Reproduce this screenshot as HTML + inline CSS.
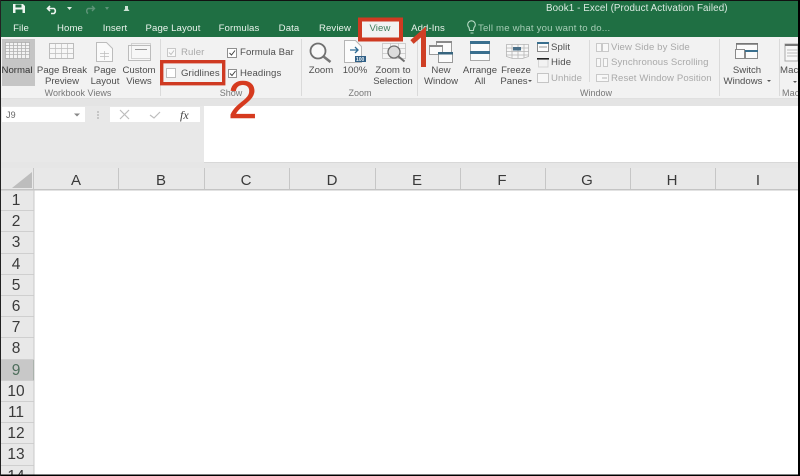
<!DOCTYPE html>
<html><head><meta charset="utf-8"><style>
html,body{margin:0;padding:0;background:#000}
#p{position:relative;width:800px;height:476px;overflow:hidden;background:#fff;font-family:"Liberation Sans",sans-serif;filter:blur(.35px)}
#p div{position:absolute}
.t{position:absolute;white-space:nowrap;transform:translateX(-50%);font-size:9.6px;line-height:11px;color:#4e4e4e}
.l{position:absolute;white-space:nowrap;font-size:9.6px;line-height:11px;color:#4e4e4e;letter-spacing:.1px}
.g{color:#a9a9a9}
.m{color:#777;font-size:9px}
.tab{position:absolute;white-space:nowrap;transform:translateX(-50%);top:23px;font-size:9.6px;line-height:12px;color:#e9f3ec;letter-spacing:.1px}
.c{position:absolute;transform:translateX(-50%);top:172px;font-size:15px;line-height:18px;color:#3a3a3a}
.r{position:absolute;width:30px;padding-right:3px;left:1px;text-align:center;font-size:15.5px;line-height:21px;color:#3a3a3a;border-bottom:1px solid #cfcfcf;background:#e8e8e8;height:20.2px;box-sizing:content-box}
svg{position:absolute;left:0;top:0}
</style></head><body><div id="p">
<div style="left:0;top:1px;width:798px;height:36px;background:#1f6f43"></div>
<div style="left:0;top:37px;width:798px;height:62px;background:#f2f2f2"></div>
<div style="left:0;top:99px;width:798px;height:7px;background:#e4e4e4"></div>
<div style="left:0;top:106px;width:798px;height:84px;background:#e8e8e8"></div>
<div style="left:204px;top:106px;width:594px;height:56px;background:#fff"></div>
<div style="left:0;top:162px;width:798px;height:6px;background:#e6e6e6"></div>
<div style="left:204px;top:162px;width:594px;height:1px;background:#d8d8d8"></div>
<div style="left:2px;top:107px;width:83px;height:15px;background:#fff"></div>
<div style="left:110px;top:107px;width:90px;height:15px;background:#fff"></div>
<div style="left:2px;top:39px;width:33px;height:47px;background:#c5c5c5"></div>
<div style="left:358px;top:19px;width:44px;height:18px;background:#f2f2f2"></div>

<span class="tab" style="left:21px">File</span>
<span class="tab" style="left:70px">Home</span>
<span class="tab" style="left:115px">Insert</span>
<span class="tab" style="left:173px">Page Layout</span>
<span class="tab" style="left:239px">Formulas</span>
<span class="tab" style="left:289px">Data</span>
<span class="tab" style="left:335px">Review</span>
<span class="tab" style="left:380px;color:#3f7d5b">View</span>
<span class="tab" style="left:428px">Add-Ins</span>
<span class="tab" style="left:478px;transform:none;color:#a6cdb6;letter-spacing:.2px">Tell me what you want to do...</span>
<span class="tab" style="left:546px;top:3px;transform:none;color:#dcebe2;font-size:9.8px">Book1 - Excel (Product Activation Failed)</span>

<span class="t" style="left:17px;top:65px;color:#333">Normal</span>
<span class="t" style="left:62px;top:65px">Page Break</span><span class="t" style="left:62px;top:76px">Preview</span>
<span class="t" style="left:105px;top:65px">Page</span><span class="t" style="left:105px;top:76px">Layout</span>
<span class="t" style="left:139px;top:65px">Custom</span><span class="t" style="left:139px;top:76px">Views</span>
<span class="t m" style="left:78px;top:88px">Workbook Views</span>
<span class="l g" style="left:181px;top:47px">Ruler</span>
<span class="l" style="left:240px;top:47px">Formula Bar</span>
<span class="l" style="left:181px;top:68px">Gridlines</span>
<span class="l" style="left:240px;top:68px">Headings</span>
<span class="t m" style="left:231px;top:88px">Show</span>
<span class="t" style="left:321px;top:65px">Zoom</span>
<span class="t" style="left:355px;top:65px">100%</span>
<span class="t" style="left:393px;top:65px">Zoom to</span><span class="t" style="left:393px;top:76px">Selection</span>
<span class="t m" style="left:360px;top:88px">Zoom</span>
<span class="t" style="left:441px;top:65px">New</span><span class="t" style="left:441px;top:76px">Window</span>
<span class="t" style="left:480px;top:65px">Arrange</span><span class="t" style="left:480px;top:76px">All</span>
<span class="t" style="left:516px;top:65px">Freeze</span><span class="t" style="left:514px;top:76px">Panes</span>
<span class="l" style="left:551px;top:42px">Split</span>
<span class="l" style="left:551px;top:57px">Hide</span>
<span class="l g" style="left:551px;top:73px">Unhide</span>
<span class="l g" style="left:611px;top:42px">View Side by Side</span>
<span class="l g" style="left:611px;top:57px">Synchronous Scrolling</span>
<span class="l g" style="left:611px;top:73px">Reset Window Position</span>
<span class="t m" style="left:596px;top:88px">Window</span>
<span class="t" style="left:747px;top:65px">Switch</span><span class="t" style="left:743px;top:76px">Windows</span>
<span class="l" style="left:780px;top:65px">Mac</span>
<span class="l m" style="left:782px;top:88px">Mac</span>
<span class="l" style="left:6px;top:110px;font-size:9px;color:#666">J9</span>
<span class="l" style="left:180px;top:108px;font:italic 12px 'Liberation Serif',serif;color:#444">fx</span>

<span class="c" style="left:76px">A</span><span class="c" style="left:161px">B</span><span class="c" style="left:246px">C</span><span class="c" style="left:332px">D</span><span class="c" style="left:417px">E</span><span class="c" style="left:502px">F</span><span class="c" style="left:587px">G</span><span class="c" style="left:672px">H</span><span class="c" style="left:758px">I</span>

<span class="r" style="top:190px">1</span><span class="r" style="top:211.2px">2</span><span class="r" style="top:232.4px">3</span><span class="r" style="top:253.6px">4</span><span class="r" style="top:274.8px">5</span><span class="r" style="top:296px">6</span><span class="r" style="top:317.2px">7</span><span class="r" style="top:338.4px">8</span>
<span class="r" style="top:359.6px;background:#c8c8c8;color:#4f6f5d;border-right:1px solid #8a9a90;padding-right:2px">9</span>
<span class="r" style="top:380.8px">10</span><span class="r" style="top:402px">11</span><span class="r" style="top:423.2px">12</span><span class="r" style="top:444.4px">13</span><span class="r" style="top:465.6px">14</span>

<svg width="800" height="476" viewBox="0 0 800 476" fill="none">
<!-- QAT -->
<path d="M13 4h10l2 2v7H13z" fill="#eef5f0"/><rect x="15.500" y="4.500" width="6" height="3" fill="#1f6f43"/><rect x="15.500" y="9.500" width="7" height="3.500" fill="#1f6f43"/>
<path d="M50 6l-2.500 2.500L50 11M48 8.500h6a3 3 0 0 1 0 5h-3" stroke="#eef5f0" stroke-width="1.600"/>
<path d="M67 7l2.500 3L72 7z" fill="#dfeee5"/>
<path d="M92 6l2.500 2.500L92 11M94 8.500h-6a3 3 0 0 0 0 5" stroke="#5d9478" stroke-width="1.400"/>
<path d="M105 7l2 3 2-3z" fill="#5d9478"/>
<path d="M125 6h3v3l1.500 2h-6l1.500-2z" fill="#cfe3d7"/>
<path d="M469 27.500a3.800 3.800 0 1 1 5 0l-.6 3h-3.800zM470.500 33h3" stroke="#b9dcc7" stroke-width="1.100"/>

<!-- group dividers -->
<g stroke="#dadada"><path d="M160.500 39v57M301.500 39v57M417.500 39v57M719.500 39v57M779.500 39v57M589.500 40v42"/></g>
<rect x="0" y="98" width="798" height="1" fill="#e0e0e0"/>

<!-- Normal -->
<g stroke="#b0b0b0" stroke-width=".8"><rect x="5.500" y="42.500" width="24" height="16" fill="#f2f2f2"/><path d="M9.500 42v17M13.500 42v17M17.500 42v17M21.500 42v17M25.500 42v17M5 45.500h25M5 48.500h25M5 51.500h25M5 54.500h25"/></g>
<!-- Page break -->
<g stroke="#bcbcbc"><rect x="49.500" y="43.500" width="24" height="15" fill="#f7f7f7"/><path d="M55.500 43v16M61.500 43v16M67.500 43v16M49 48.500h25M49 53.500h25" stroke-width=".7"/></g>
<!-- Page Layout -->
<g stroke="#bcbcbc"><path d="M96.500 42.500h10l6 6v13h-16z" fill="#fafafa"/><path d="M100 53.500h9M100 56.500h9M104.500 51v9" stroke-width=".7"/></g>
<!-- Custom -->
<g stroke="#bcbcbc"><rect x="128.500" y="45.500" width="22" height="15" fill="#f7f7f7"/><rect x="131.500" y="43.500" width="19" height="15" stroke-width=".6"/><path d="M135 49.500h12" stroke="#999"/></g>

<!-- checkboxes -->
<g stroke="#c8c8c8" fill="#f9f9f9"><rect x="167.500" y="48.500" width="8" height="8"/></g>
<path d="M169 52.500l2 2 3-4" stroke="#c0c0c0"/>
<g stroke="#8f8f8f" fill="#fff"><rect x="227.500" y="48.500" width="9" height="9"/><rect x="228.500" y="69.500" width="8" height="8"/></g>
<path d="M229.500 53l2 2 3.500-4.500M230 73.500l2 2 3.500-4.500" stroke="#444"/>
<rect x="166.500" y="68.500" width="9" height="9" stroke="#bdbdbd" fill="#fff"/>

<!-- Zoom -->
<circle cx="318" cy="51" r="7.500" stroke="#707070" stroke-width="1.800" fill="#f8f8f8"/><path d="M323.500 56.500l7 5.500" stroke="#777" stroke-width="2.600"/>
<!-- 100% -->
<path d="M344.500 40.500h11l6 6v16h-17z" fill="#fcfcfc" stroke="#b5b5b5"/><path d="M350 50h8M355 47l3 3-3 3" stroke="#2f6c95" stroke-width="1.300"/><rect x="355" y="56" width="11" height="6" fill="#2f5f86"/>
<text x="356" y="61" font-family="Liberation Sans" font-size="5" font-weight="bold" fill="#e8f0f5">100</text>
<!-- Zoom to selection -->
<g stroke="#c4c4c4" stroke-width=".8"><rect x="382.500" y="43.500" width="23" height="15" fill="#f5f5f5"/><path d="M382 48.500h24M382 53.500h24M390.500 43v16M398.500 43v16"/></g>
<circle cx="394" cy="52" r="6" fill="#dcdcdc" stroke="#6e6e6e" stroke-width="1.300"/><path d="M398.500 56.500l6 5" stroke="#6e6e6e" stroke-width="2"/>
<!-- New Window -->
<g stroke="#9a9a9a" fill="#fbfbfb"><rect x="436.500" y="41.500" width="15" height="11"/><rect x="429.500" y="45.500" width="13" height="9"/><rect x="438.500" y="52.500" width="14" height="10"/></g>
<path d="M436 41h16v2H436zM429 45h14v2H429z" fill="#8a8a8a"/><path d="M438 52h15v2.500h-15z" fill="#37657f"/>
<!-- Arrange -->
<rect x="470.500" y="42.500" width="19" height="18" fill="#fbfbfb" stroke="#a8a8a8"/><path d="M470 41h20v3h-20zM470 51h20v3h-20z" fill="#3a6f8e"/>
<!-- Freeze -->
<g stroke="#b5b5b5" stroke-width=".8"><path d="M506.500 44.500h22v12l-6 2h-10l-6-2z" fill="#f7f7f7"/><path d="M506 48h23M506 51.500h23M506 55h23M512 44v14M518 44v14M524 44v14"/></g><rect x="513" y="47" width="8" height="3.500" fill="#4a6f88"/>
<path d="M528 80l2 2 2-2z" fill="#555"/>
<!-- Split Hide Unhide -->
<rect x="537.500" y="42.500" width="11" height="9" stroke="#8a8a8a" fill="#fcfcfc"/><path d="M537 42h12v2h-12z" fill="#3a6f8e"/><path d="M539 47h8" stroke="#999"/>
<rect x="537" y="58" width="12" height="1.600" fill="#222"/><path d="M538.500 60v7h9.500v-7" stroke="#d5d5d5"/>
<rect x="537.500" y="73.500" width="11" height="9" stroke="#c5c5c5" fill="#f7f7f7"/>
<!-- view side -->
<g stroke="#c9c9c9" fill="#f8f8f8"><path d="M596.500 43.500h5v8h-5zM602.500 43.500h6v8h-6z"/><path d="M596.500 58.500h4v8h-4zM603.500 58.500h4v8h-4z"/><rect x="596.500" y="74.500" width="12" height="7"/></g>
<path d="M602 78h5" stroke="#b5b5b5"/>
<!-- Switch -->
<g stroke="#8a8a8a" fill="#fbfbfb"><rect x="736.500" y="43.500" width="21" height="12"/><rect x="735.500" y="49.500" width="9" height="9"/><rect x="745.500" y="50.500" width="12" height="8"/></g>
<path d="M736 43h22v1.800h-22z" fill="#777"/><path d="M745 50h13v2h-13z" fill="#3a6f8e"/>
<path d="M767 80l2 2 2-2z" fill="#555"/>
<!-- Macros -->
<path d="M785 44h13v17h-13z" fill="#f7f7f7" stroke="#aaa"/><path d="M785 44h13v2h-13z" fill="#777"/><path d="M787 50h11M787 53h11M787 56h11" stroke="#bbb"/>
<path d="M793 81l2 2 2-2z" fill="#555"/>
<!-- formula bar -->
<path d="M74 113.500l3 3 3-3z" fill="#888"/>
<circle cx="98" cy="112" r="1" fill="#bbb"/><circle cx="98" cy="115" r="1" fill="#bbb"/><circle cx="98" cy="118" r="1" fill="#bbb"/>
<path d="M120 110l9 9M129 110l-9 9" stroke="#bdbdbd" stroke-width="1.200"/>
<path d="M150 115l4 3 6-6" stroke="#bdbdbd" stroke-width="1.200"/>
<!-- grid headers -->
<path d="M32 172v16H12z" fill="#bdbdbd"/>
<g stroke="#c6c6c6"><path d="M33.500 168v22M118.500 168v22M204.500 168v22M289.500 168v22M375.500 168v22M460.500 168v22M545.500 168v22M630.500 168v22M715.500 168v22"/></g>
<rect x="1" y="189" width="797" height="1.500" fill="#c4c4c4"/>
<rect x="33.500" y="190" width="1" height="285" fill="#c9c9c9"/>
<!-- red annotations -->
<rect x="360" y="19.500" width="41" height="20" stroke="#cf3a22" stroke-width="4"/>
<rect x="161.700" y="61.700" width="62" height="22" stroke="#cf3a22" stroke-width="3.400"/>
<path d="M412 42l11.500-10V67" stroke="#cf3f25" stroke-width="5"/>
<text x="228" y="118" font-family="Liberation Sans" font-size="53" fill="#d63a1f" stroke="#d63a1f" stroke-width=".4">2</text>
<!-- frame edges -->
<rect x="0" y="0" width="800" height="1" fill="#111"/>
<rect x="798" y="0" width="2" height="476" fill="#000"/>
<rect x="0" y="474.500" width="800" height="1.500" fill="#000"/>
<rect x="0" y="0" width="1" height="476" fill="#222"/>
</svg>
</div></body></html>
